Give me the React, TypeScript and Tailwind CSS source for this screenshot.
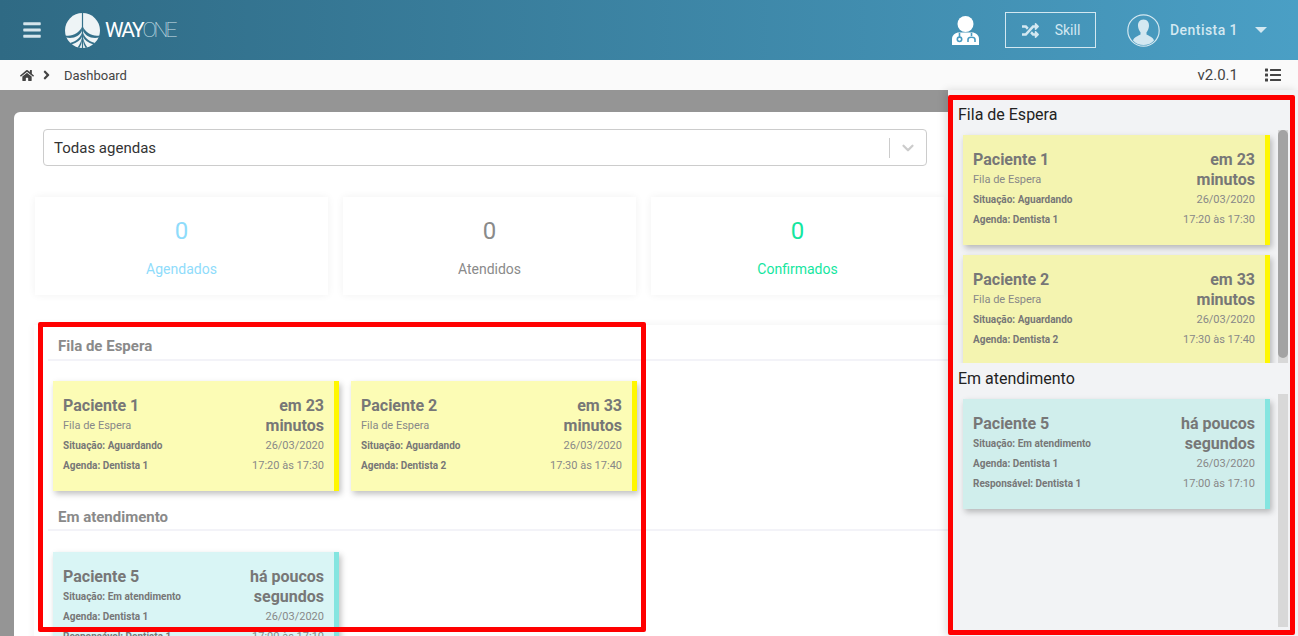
import { ChevronDown } from "lucide-react";
import { FaAngleRight, FaBars, FaHome, FaList, FaRandom } from "react-icons/fa";

type Card = {
  name: string;
  when: string[];
  lines: string[];
  date: string;
  time: string;
};

const waiting: Card[] = [
  {
    name: "Paciente 1",
    when: ["em 23", "minutos"],
    lines: ["Situação: Aguardando", "Agenda: Dentista 1"],
    date: "26/03/2020",
    time: "17:20 às 17:30",
  },
  {
    name: "Paciente 2",
    when: ["em 33", "minutos"],
    lines: ["Situação: Aguardando", "Agenda: Dentista 2"],
    date: "26/03/2020",
    time: "17:30 às 17:40",
  },
];

const attending: Card = {
  name: "Paciente 5",
  when: ["há poucos", "segundos"],
  lines: ["Situação: Em atendimento", "Agenda: Dentista 1", "Responsável: Dentista 1"],
  date: "26/03/2020",
  time: "17:00 às 17:10",
};

function PatientCard({ card, className, bar }: { card: Card; className: string; bar: string }) {
  const waitingCard = card.lines.length === 2;
  return (
    <div className={`flex h-[110px] shrink-0 shadow-[2px_3px_6px_rgba(0,0,0,0.25)] ${className}`}>
      <div className="flex min-w-0 flex-1 justify-between pt-[15px] pr-[10px] pl-[10px] text-[#777]">
        <div>
          <div className="text-[16px] leading-5 font-bold">{card.name}</div>
          {waitingCard && <div className="text-[11px] leading-5 text-[#888]">Fila de Espera</div>}
          {card.lines.map((line) => (
            <div key={line} className="text-[10px] leading-5 font-bold">
              {line}
            </div>
          ))}
        </div>
        <div className="text-right">
          {card.when.map((w) => (
            <div key={w} className="text-[16px] leading-5 font-bold">
              {w}
            </div>
          ))}
          <div className="text-[11px] leading-5 text-[#888]">{card.date}</div>
          <div className="text-[11px] leading-5 text-[#888]">{card.time}</div>
        </div>
      </div>
      <div className={`w-[5px] shrink-0 ${bar}`} />
    </div>
  );
}

function Stat({ label, color }: { label: string; color: string }) {
  return (
    <div className={`flex h-[98px] w-[293px] flex-col items-center bg-white pt-[18px] shadow-[0_0_8px_rgba(0,0,0,0.06)] ${color}`}>
      <div className="text-[24px] leading-8">0</div>
      <div className="mt-[12px] text-[14px] leading-5">{label}</div>
    </div>
  );
}

function Logo() {
  return (
    <svg width="35" height="35" viewBox="0 0 35 35">
      <circle cx="17.5" cy="17.5" r="17.5" fill="#eef4f6" />
      <path d="M16.9 0H18.1V35H16.9Z" fill="#35718b" />
      <g fill="#35718b">
        <path d="M16.9 14C14 20 8 23.5 0.5 22.5L0.8 24.5C9 26 14.5 23 16.9 18Z" />
        <path d="M18.1 14C21 20 27 23.5 34.5 22.5L34.2 24.5C26 26 20.5 23 18.1 18Z" />
        <path d="M16.9 20C15 25 11 28.5 5 30L6.5 31.5C12 30 15.5 27 16.9 24Z" />
        <path d="M18.1 20C20 25 24 28.5 30 30L28.5 31.5C23 30 19.5 27 18.1 24Z" />
        <path d="M16.9 25C16 29 14.5 32 12.5 34.5L14.3 35C15.8 32.5 16.6 30.5 16.9 28Z" />
        <path d="M18.1 25C19 29 20.5 32 22.5 34.5L20.7 35C19.2 32.5 18.4 30.5 18.1 28Z" />
      </g>
    </svg>
  );
}

function Doctor() {
  return (
    <svg width="27" height="29" viewBox="0 0 27 29" fill="#fff">
      <circle cx="13.5" cy="8" r="8" />
      <path d="M0 29V23C0 19 3.5 16.5 7 16.5H20C23.5 16.5 27 19 27 23V29Z" />
      <g fill="none" stroke="#499cc2" strokeWidth="1.6">
        <path d="M7.5 17V21" />
        <circle cx="7.5" cy="23.3" r="2.2" />
        <path d="M19.5 17V20M16 26V23.5C16 20.5 23 20.5 23 23.5V26" />
      </g>
    </svg>
  );
}

function Avatar() {
  return (
    <svg width="33" height="33" viewBox="0 0 33 33">
      <circle cx="16.5" cy="16.5" r="15.7" fill="none" stroke="#d3e8f1" strokeWidth="1.2" />
      <path
        d="M16.5 5.5C12.5 5.5 10.8 8.5 11 12C11.2 15 12.5 17 13.5 18.2V20.5C11 22 7 23 6 26.5C8.5 29.5 12.5 31 16.5 31C20.5 31 24.5 29.5 27 26.5C26 23 22 22 19.5 20.5V18.2C20.5 17 21.8 15 22 12C22.2 8.5 20.5 5.5 16.5 5.5Z"
        fill="#d3e8f1"
      />
    </svg>
  );
}

function Scrollbar({ thumb }: { thumb: boolean }) {
  return (
    <div className="w-[10px] shrink-0 bg-[#d8d8d8]">
      {thumb && <div className="h-[228px] rounded-[5px] bg-[#a3a3a3]" />}
    </div>
  );
}

export default function App() {
  return (
    <div className="relative flex h-[636px] w-[1298px] flex-col overflow-hidden bg-[#959595] font-['Roboto',sans-serif]">
      <header className="flex h-[60px] shrink-0 items-center bg-gradient-to-r from-[#2f6a84] to-[#4a9fc5] text-[#d3e8f1]">
        <FaBars className="ml-[23px] h-[20px] w-[18px] text-[#d5e5ec]" />
        <div className="ml-[24px]">
          <Logo />
        </div>
        <div className="ml-[5px] text-[21px] leading-none tracking-[-2px] text-white">
          WAY<span className="font-thin tracking-[-3px] text-[#d0e2e9]">ONE</span>
        </div>
        <div className="flex-1" />
        <Doctor />
        <div className="ml-[26px] flex h-9 w-[91px] items-center justify-center gap-[15px] border border-[#d3e8f1] text-[14px]">
          <FaRandom className="h-[17px] w-[19px]" />
          Skill
        </div>
        <div className="ml-[31px]">
          <Avatar />
        </div>
        <div className="ml-[10px] text-[14px] font-medium tracking-[0.45px]">Dentista 1</div>
        <div className="mr-[31px] ml-[17px] h-0 w-0 border-x-[6px] border-t-[6px] border-x-transparent border-t-[#d3e8f1]" />
      </header>

      <div className="flex h-[30px] shrink-0 items-center bg-[#fafafa] pr-[16px] pl-[20px] text-[#444]">
        <FaHome className="h-[13px] w-[14px]" />
        <FaAngleRight className="ml-[7px] h-[14px] w-[11px]" />
        <span className="mt-[1px] ml-[12px] text-[13px]">Dashboard</span>
        <span className="mt-[1px] mr-[26px] ml-auto text-[15px]">v2.0.1</span>
        <FaList className="h-[16px] w-[18px]" />
      </div>

      <main className="mt-[22px] ml-[14px] flex-1 rounded-tl-[6px] bg-white pt-[17px]">
        <div className="ml-[29px] flex h-[37px] w-[884px] items-center rounded-[4px] border border-[#ccc] pr-[9px] pl-[10px] text-[15px] text-[#333]">
          <span className="mt-[2px]">Todas agendas</span>
          <div className="ml-auto h-5 w-px bg-[#ccc]" />
          <ChevronDown className="ml-[9px] h-[18px] w-[18px] text-[#ccc]" strokeWidth={3} />
        </div>

        <div className="mt-[31px] ml-[21px] flex gap-[15px]">
          <Stat label="Agendados" color="text-[#8fdcfb]" />
          <Stat label="Atendidos" color="text-[#8a8a8a]" />
          <Stat label="Confirmados" color="text-[#14e6a0]" />
        </div>

        <section className="mt-[30px] ml-[20px] h-[400px] bg-white pl-[14px] shadow-[0_0_8px_rgba(0,0,0,0.06)]">
          <h3 className="flex h-[36px] items-end border-b-2 border-[#f3f3f8] pb-[2px] pl-[10px] text-[15px] font-bold text-[#8a8a8a]">
            Fila de Espera
          </h3>
          <div className="mt-[20px] flex gap-[12px] pl-[5px]">
            {waiting.map((c) => (
              <div key={c.name} className="w-[286px]">
                <PatientCard card={c} className="bg-[#fcfcb5]" bar="bg-[#fff700]" />
              </div>
            ))}
          </div>
          <h3 className="mt-[13px] flex h-[27px] items-end border-b-2 border-[#f3f3f8] pb-[1px] pl-[10px] text-[15px] font-bold text-[#8a8a8a]">
            Em atendimento
          </h3>
          <div className="mt-[21px] box-content w-[286px] pl-[5px]">
            <PatientCard card={attending} className="bg-[#d9f5f5]" bar="bg-[#84e5e0]" />
          </div>
        </section>
      </main>

      {/* painel lateral por cima do conteudo */}
      <aside className="absolute top-[90px] right-0 bottom-0 flex w-[350px] flex-col bg-[#f2f3f5] pt-[15px] pl-[10px] shadow-[-3px_0_8px_rgba(0,0,0,0.12)]">
        <div className="text-[16px] leading-5 text-[#222]">Fila de Espera</div>
        <div className="mt-[5px] flex h-[233px] shrink-0">
          <div className="w-[320px] overflow-hidden pt-[5px] pl-[5px]">
            <div className="flex w-[307px] flex-col gap-[10px]">
              {waiting.map((c) => (
                <PatientCard key={c.name} card={c} className="bg-[#f4f4b0]" bar="bg-[#fff700]" />
              ))}
            </div>
          </div>
          <Scrollbar thumb />
        </div>
        <div className="mt-[6px] text-[16px] leading-5 text-[#222]">Em atendimento</div>
        <div className="mt-[5px] flex h-[233px] shrink-0">
          <div className="w-[320px] overflow-hidden pt-[5px] pl-[5px]">
            <div className="w-[307px]">
              <PatientCard card={attending} className="bg-[#d0eeec]" bar="bg-[#84e5e0]" />
            </div>
          </div>
          <Scrollbar thumb={false} />
        </div>
      </aside>

      {/* marcacoes vermelhas */}
      <div className="pointer-events-none absolute top-[322px] left-[38px] h-[310px] w-[608px] rounded-[2px] border-[5px] border-[#ff0000]" />
      <div className="pointer-events-none absolute top-[95px] left-[948px] h-[540px] w-[347px] rounded-[2px] border-[5px] border-[#ff0000]" />
    </div>
  );
}
